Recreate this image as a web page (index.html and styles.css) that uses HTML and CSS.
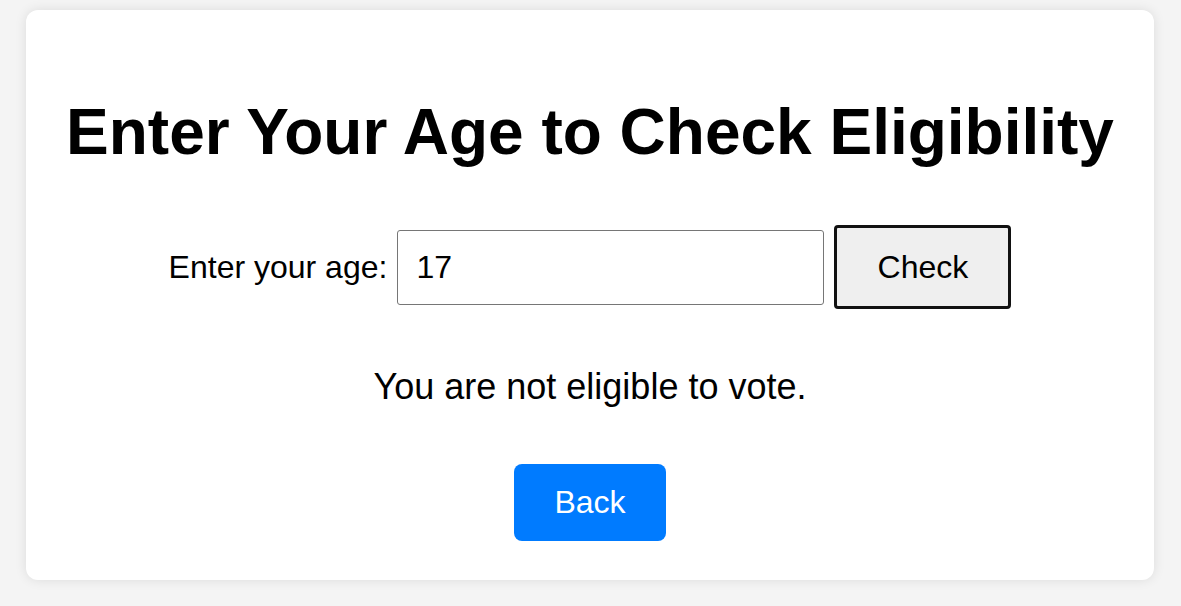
FILE: index.html
```html
<!DOCTYPE html>
<html>
<head>
<meta charset="utf-8">
<link rel="stylesheet" href="styles.css">
</head>
<body>
<div class="card">
  <h1 class="title">Enter Your Age to Check Eligibility</h1>
  <div class="form-row">
    <label class="label" for="age">Enter your age:</label>
    <input class="age-input" id="age" type="text" value="17">
    <button class="check-btn">Check</button>
  </div>
  <p class="result">You are not eligible to vote.</p>
  <button class="back-btn">Back</button>
</div>
</body>
</html>
```
FILE: styles.css
```css
html, body {
  margin: 0;
  padding: 0;
}
body {
  background: #f4f4f4;
  font-family: "Liberation Sans", Arial, sans-serif;
  padding: 10px 27px 26px 26px;
  height: 606px;
  box-sizing: border-box;
}
.card {
  background: #fff;
  border-radius: 12px;
  box-shadow: 0 0 12px rgba(0,0,0,0.1);
  height: 570px;
  box-sizing: border-box;
  display: flex;
  flex-direction: column;
  align-items: center;
  padding-top: 90px;
}
.title {
  margin: 0;
  font-size: 64px;
  font-weight: bold;
  line-height: 1;
  color: #000;
}
.form-row {
  display: flex;
  align-items: center;
  margin-top: 61px;
  gap: 10px;
}
.label {
  font-size: 32px;
  color: #000;
}
.age-input {
  width: 427px;
  height: 75px;
  box-sizing: border-box;
  border: 1px solid #767676;
  border-radius: 3px;
  font-family: "Liberation Sans", Arial, sans-serif;
  font-size: 32px;
  padding: 0 18px;
  margin: 0;
  color: #000;
}
.check-btn {
  width: 177px;
  height: 84px;
  box-sizing: border-box;
  border: 3px solid #111;
  border-radius: 4px;
  background: #efefef;
  font-family: "Liberation Sans", Arial, sans-serif;
  font-size: 32px;
  color: #000;
  margin: 0;
}
.result {
  margin: 56px 0 0;
  font-size: 36px;
  line-height: 1.2;
  color: #000;
}
.back-btn {
  margin-top: 56px;
  width: 152px;
  height: 77px;
  border: none;
  border-radius: 8px;
  background: #007bff;
  color: #fff;
  font-family: "Liberation Sans", Arial, sans-serif;
  font-size: 32px;
}
```
